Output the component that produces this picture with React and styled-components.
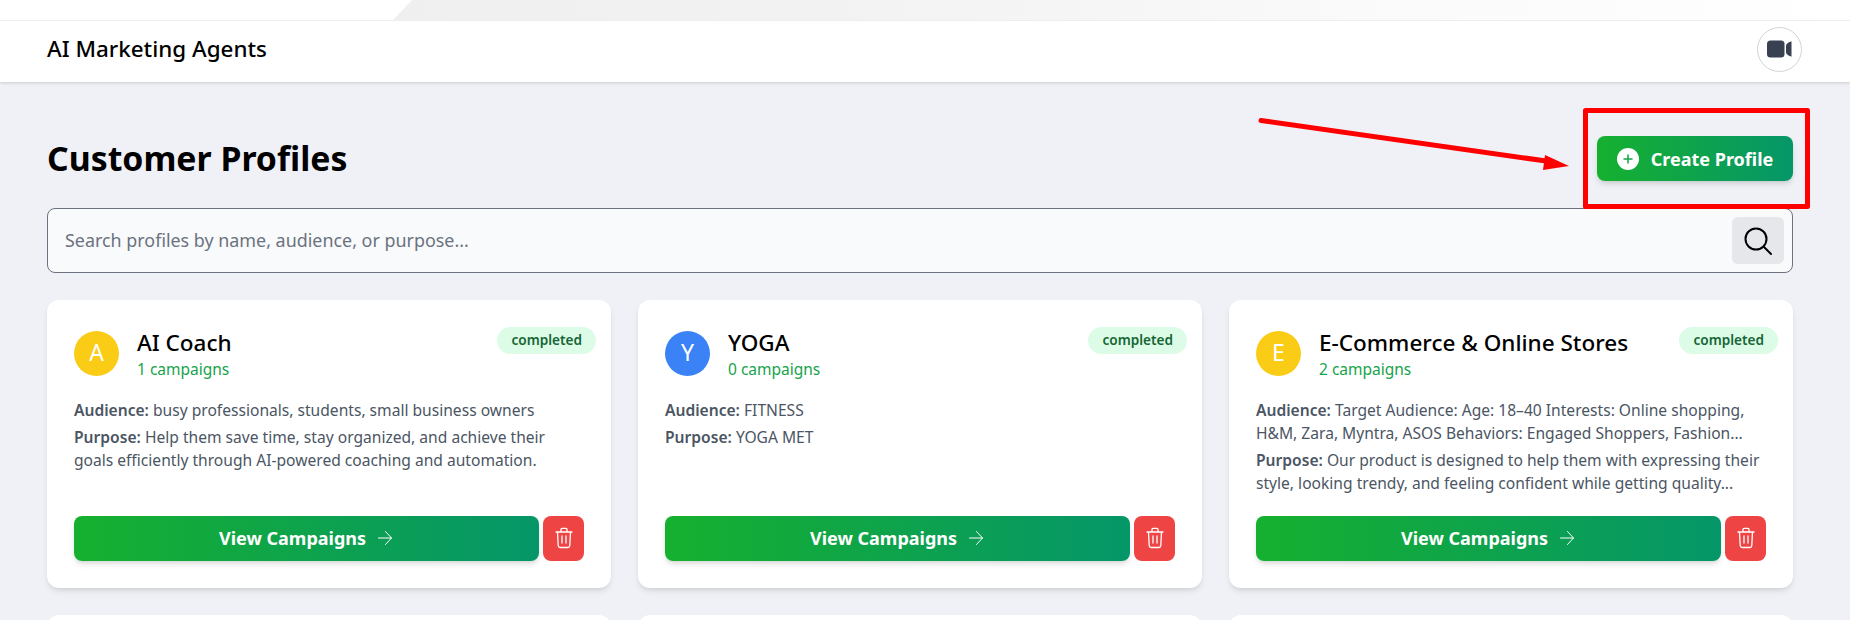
import React from "react";
import styled, { createGlobalStyle } from "styled-components";

const Global = createGlobalStyle`
  html, body { margin: 0; padding: 0; height: 620px; overflow: hidden; background: #f0f1f6; }
  body { font-family: "Noto Sans", "Open Sans", sans-serif; color: #000; }
  * { box-sizing: border-box; }
`;

const Page = styled.div`
  position: relative;
  height: 620px;
  overflow: hidden;
`;

const TopStrip = styled.div`
  position: relative;
  height: 20px;
  background: #fff;
  &::after {
    content: "";
    position: absolute;
    inset: 0;
    background: linear-gradient(90deg, #ededed 0%, #f2f2f2 45%, #fbfbfb 78%, #fff 100%);
    clip-path: polygon(412px 0, 100% 0, 100% 100%, 393px 100%);
  }
`;

const Header = styled.header`
  display: flex;
  align-items: center;
  justify-content: space-between;
  height: 62px;
  padding: 0 48px 5px 47px;
  background: #fff;
  border-top: 1px solid #eeeeef;
  box-shadow: 0 1px 3px rgba(0, 0, 0, 0.16);
`;

const Brand = styled.h1`
  margin: 0 0 1px;
  font-size: 22.4px;
  line-height: 30px;
  font-weight: 500;
`;

const VideoButton = styled.button`
  display: flex;
  align-items: center;
  justify-content: center;
  width: 45px;
  height: 45px;
  padding: 0;
  background: #fff;
  border: 1px solid #d1d5db;
  border-radius: 50%;
`;

const Main = styled.main`
  padding: 54px 57px 0 47px;
`;

const TitleRow = styled.div`
  display: flex;
  align-items: center;
  justify-content: space-between;
  height: 45px;
`;

const Title = styled.h2`
  margin: 0;
  font-size: 33.8px;
  line-height: 45px;
  font-weight: 700;
`;

const PrimaryButton = styled.button`
  display: flex;
  align-items: center;
  justify-content: center;
  gap: 12px;
  height: 45px;
  width: 196px;
  padding: 0;
  border: 0;
  border-radius: 8px;
  color: #fff;
  font-family: inherit;
  font-size: 18px;
  font-weight: 700;
  background: linear-gradient(90deg, #16b02f, #059669);
  box-shadow: 0 4px 6px -1px rgba(0, 0, 0, 0.12), 0 2px 4px -2px rgba(0, 0, 0, 0.1);
`;

const PlusDisc = styled.span`
  display: flex;
  align-items: center;
  justify-content: center;
  width: 22px;
  height: 22px;
  border-radius: 50%;
  background: #fff;
`;

const SearchBox = styled.div`
  display: flex;
  align-items: center;
  justify-content: space-between;
  height: 65px;
  margin-top: 27px;
  padding: 0 8px 0 17px;
  background: #f9fafb;
  border: 1px solid #6b7280;
  border-radius: 8px;
`;

const Placeholder = styled.span`
  font-size: 17.9px;
  line-height: 24px;
  margin-top: -2px;
  color: #6b7280;
`;

const SearchButton = styled.span`
  display: flex;
  align-items: center;
  justify-content: center;
  width: 52px;
  height: 47px;
  background: #e5e7eb;
  border-radius: 6px;
`;

const Grid = styled.div`
  display: grid;
  grid-template-columns: repeat(3, 564px);
  gap: 27px;
  margin-top: 27px;
`;

const Card = styled.article`
  position: relative;
  display: flex;
  flex-direction: column;
  height: 288px;
  padding: 31px 27px 27px;
  background: #fff;
  border-radius: 12px;
  box-shadow: 0 4px 6px -1px rgba(0, 0, 0, 0.1), 0 2px 4px -2px rgba(0, 0, 0, 0.08);
`;

const Badge = styled.span`
  position: absolute;
  top: 27px;
  right: 15px;
  height: 27px;
  padding: 0 14px;
  border-radius: 14px;
  background: #dcfce7;
  color: #166534;
  font-size: 13.6px;
  font-weight: 600;
  line-height: 25px;
`;

const CardHead = styled.div`
  display: flex;
  align-items: flex-start;
  gap: 18px;
  height: 45px;
`;

const Avatar = styled.div`
  flex: none;
  display: flex;
  align-items: center;
  justify-content: center;
  width: 45px;
  height: 45px;
  padding-bottom: 3px;
  border-radius: 50%;
  background: ${(p) => p.$color};
  color: #fff;
  font-size: 23px;
`;

const Name = styled.h3`
  margin: -1px 0 0;
  font-size: 22.5px;
  line-height: 26px;
  font-weight: 500;
`;

const Count = styled.div`
  margin-top: 2px;
  font-size: 15.5px;
  line-height: 22px;
  color: #16a34a;
`;

const Info = styled.div`
  margin-top: 23px;
  flex: 1;
`;

const Line = styled.p`
  margin: 0 0 4px;
  font-size: 15.6px;
  line-height: 23px;
  color: #4b5563;
  b { font-weight: 600; }
`;

const Actions = styled.div`
  display: flex;
  gap: 4px;
`;

const ViewButton = styled(PrimaryButton)`
  flex: 1;
  width: auto;
  gap: 10px;
  padding-bottom: 2px;
`;

const TrashButton = styled.button`
  flex: none;
  display: flex;
  align-items: center;
  justify-content: center;
  width: 41px;
  height: 45px;
  padding: 0 0 2px;
  border: 0;
  border-radius: 8px;
  background: #ef4444;
`;

const Annotation = styled.svg`
  position: absolute;
  left: 0;
  top: 0;
  pointer-events: none;
`;

const Trash = () => (
  <svg width="20" height="22" viewBox="0 0 20 22" fill="none" stroke="#fff" strokeWidth="1.3" strokeLinecap="round" strokeLinejoin="round">
    <path d="M2 5h16M7 5V2.5C7 1.8 7.5 1.4 8 1.4h4c.6 0 1 .4 1 1.1V5M3.5 5l.7 13.5c.1 1 .9 2 2 2h7.6c1.1 0 1.9-1 2-2L16.500 5M8 9v7M12 9v7" />
  </svg>
);

const Arrow = () => (
  <svg width="18" height="18" viewBox="0 0 18 18" fill="none" stroke="#fff" strokeWidth="1" strokeLinecap="round" strokeLinejoin="round">
    <path d="M2.5 9h13M9.5 2.500 15.500 9l-6 6.500" />
  </svg>
);

const profiles = [
  {
    letter: "A", color: "#facc15", name: "AI Coach", count: "1 campaigns",
    audience: "busy professionals, students, small business owners",
    purpose: "Help them save time, stay organized, and achieve their goals efficiently through AI-powered coaching and automation.",
  },
  {
    letter: "Y", color: "#3b82f6", name: "YOGA", count: "0 campaigns",
    audience: "FITNESS",
    purpose: "YOGA MET",
  },
  {
    letter: "E", color: "#facc15", name: "E-Commerce & Online Stores", count: "2 campaigns",
    audience: "Target Audience: Age: 18–40 Interests: Online shopping, H&M, Zara, Myntra, ASOS Behaviors: Engaged Shoppers, Fashion...",
    purpose: "Our product is designed to help them with expressing their style, looking trendy, and feeling confident while getting quality...",
  },
];

const ProfileCard = ({ p }) => (
  <Card>
    <Badge>completed</Badge>
    <CardHead>
      <Avatar $color={p.color}>{p.letter}</Avatar>
      <div>
        <Name>{p.name}</Name>
        <Count>{p.count}</Count>
      </div>
    </CardHead>
    <Info>
      <Line><b>Audience:</b> {p.audience}</Line>
      <Line><b>Purpose:</b> {p.purpose}</Line>
    </Info>
    <Actions>
      <ViewButton>View Campaigns <Arrow /></ViewButton>
      <TrashButton aria-label="Delete"><Trash /></TrashButton>
    </Actions>
  </Card>
);

export default function App() {
  return (
    <Page>
      <Global />
      <TopStrip />
      <Header>
        <Brand>AI Marketing Agents</Brand>
        <VideoButton aria-label="Video">
          <svg width="25" height="18" viewBox="0 0 25 18" fill="#374151">
            <rect x="0" y="0.5" width="17.5" height="17" rx="3.5" />
            <path d="M24.5 1.5v15c-2 0-5.500-2.500-5.500-4V5.500c0-1.500 3.500-4 5.500-4z" />
          </svg>
        </VideoButton>
      </Header>
      <Main>
        <TitleRow>
          <Title>Customer Profiles</Title>
          <PrimaryButton>
            <PlusDisc>
              <svg width="10" height="10" viewBox="0 0 10 10" stroke="#16a34a" strokeWidth="1.5" strokeLinecap="round">
                <path d="M5 1v8M1 5h8" />
              </svg>
            </PlusDisc>
            Create Profile
          </PrimaryButton>
        </TitleRow>
        <SearchBox>
          <Placeholder>Search profiles by name, audience, or purpose...</Placeholder>
          <SearchButton>
            <svg width="30" height="30" viewBox="0 0 30 30" fill="none" stroke="#000" strokeWidth="2" strokeLinecap="round">
              <circle cx="13" cy="13" r="10.5" />
              <path d="M21 21l7 7" />
            </svg>
          </SearchButton>
        </SearchBox>
        <Grid>
          {profiles.map((p) => <ProfileCard key={p.name} p={p} />)}
          {profiles.map((p) => <Card key={p.name + "-next"} />)}
        </Grid>
      </Main>
      <Annotation width="1850" height="620" viewBox="0 0 1850 620">
        <rect x="1585.5" y="110.5" width="222" height="96" fill="none" stroke="#ff0000" strokeWidth="5" strokeLinejoin="round" />
        <path d="M1261 120.5 L1546 161" stroke="#ff0000" strokeWidth="5" strokeLinecap="round" />
        <path d="M1545 155 L1569 166 L1543 170 Z" fill="#ff0000" />
      </Annotation>
    </Page>
  );
}
